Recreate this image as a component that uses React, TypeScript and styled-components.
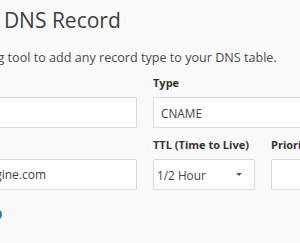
import styled, { createGlobalStyle } from 'styled-components'

const GlobalStyle = createGlobalStyle`
  html, body {
    margin: 0;
    padding: 0;
    background: #f9f9f9;
    overflow: hidden;
  }
  body {
    font-family: "Open Sans", "Liberation Sans", sans-serif;
    color: #3a3a3a;
  }
`

// the screenshot is a crop, so the panel starts left of the window
const Panel = styled.div`
  margin-left: -107px;
  padding-top: 8px;
  width: 600px;
`

const Title = styled.h1`
  margin: 0;
  font-size: 21px;
  line-height: 25px;
  font-weight: 400;
  color: #404040;
`

const Subtitle = styled.p`
  margin: 16px 0 9px 10px;
  font-size: 12.6px;
  line-height: 18px;
  color: #4a4a4a;
`

const FormGrid = styled.div`
  display: grid;
  grid-template-columns: 244px 244px;
  column-gap: 16px;
  row-gap: 10px;
`

const SubGrid = styled.div`
  display: grid;
  grid-template-columns: 102px 1fr;
  column-gap: 16px;
`

const Field = styled.div`
  display: flex;
  flex-direction: column;
`

const Label = styled.label`
  font-size: 11px;
  line-height: 14px;
  font-weight: 700;
  color: #333;
  margin-bottom: 7px;
  white-space: nowrap;
`

const Input = styled.input`
  box-sizing: border-box;
  height: 31px;
  width: 100%;
  padding: 0 7px;
  border: 1px solid #dadada;
  border-radius: 1px;
  background: #fff;
  font-family: inherit;
  font-size: 12px;
  color: #444;
  outline: none;
`

const Select = styled.div<{ $pad?: number }>`
  box-sizing: border-box;
  height: 31px;
  display: flex;
  align-items: center;
  justify-content: space-between;
  padding: 0 12px 0 ${p => p.$pad ?? 7}px;
  border: 1px solid #dadada;
  border-radius: 1px;
  background: #fff;
  font-size: 11.8px;
  color: #444;
`

const Caret = styled.span`
  width: 0;
  height: 0;
  border-left: 3px solid transparent;
  border-right: 3px solid transparent;
  border-top: 3px solid #555;
`

const Actions = styled.div`
  margin-top: 19px;
  padding-left: 98px;
`

const AddDot = styled.button`
  display: block;
  width: 11px;
  height: 11px;
  padding: 0;
  border: none;
  border-radius: 50%;
  background: #0b82de;
`

export default function App() {
  return (
    <>
      <GlobalStyle />
      <Panel>
        <Title>Add a New DNS Record</Title>
        <Subtitle>Use the following tool to add any record type to your DNS table.</Subtitle>
        <FormGrid>
          <Field>
            <Label>Host</Label>
            <Input defaultValue="" />
          </Field>
          <Field>
            <Label>Type</Label>
            <Select>
              CNAME
              <Caret />
            </Select>
          </Field>
          <Field>
            <Label>Value</Label>
            <Input defaultValue="mywebsite.wpengine.com" />
          </Field>
          <SubGrid>
            <Field>
              <Label>TTL (Time to Live)</Label>
              <Select $pad={3}>
                1/2 Hour
                <Caret />
              </Select>
            </Field>
            <Field>
              <Label>Priority</Label>
              <Input defaultValue="" />
            </Field>
          </SubGrid>
        </FormGrid>
        <Actions>
          <AddDot aria-label="Add record" />
        </Actions>
      </Panel>
    </>
  )
}
